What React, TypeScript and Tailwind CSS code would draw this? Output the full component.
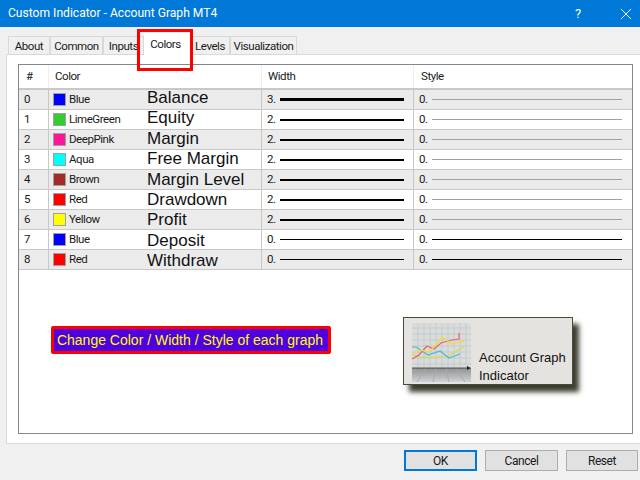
import React from 'react';

const TABS = [
  { label: 'About', cls: 'w-[42px]' },
  { label: 'Common', cls: 'w-[53px]' },
  { label: 'Inputs', cls: 'w-[41px]' },
  { label: 'Colors', cls: 'w-[46px] pr-[3px]', active: true },
  { label: 'Levels', cls: 'w-[40px]' },
  { label: 'Visualization', cls: 'w-[67px]' },
];

const ROWS = [
  { name: 'Blue', swatch: 'bg-[#0000ff]', label: 'Balance', width: '3.', line: 'h-[3px]', style: 'bg-[#a0a0a0]', lift: '-translate-y-[2px]' },
  { name: 'LimeGreen', swatch: 'bg-[#32cd32]', label: 'Equity', width: '2.', line: 'h-[2px]', style: 'bg-[#a0a0a0]', lift: '-translate-y-[2px]' },
  { name: 'DeepPink', swatch: 'bg-[#ff1493]', label: 'Margin', width: '2.', line: 'h-[2px]', style: 'bg-[#a0a0a0]', lift: '-translate-y-[1px]' },
  { name: 'Aqua', swatch: 'bg-[#00ffff]', label: 'Free Margin', width: '2.', line: 'h-[2px]', style: 'bg-[#a0a0a0]', lift: '-translate-y-[1px]' },
  { name: 'Brown', swatch: 'bg-[#a52a2a]', label: 'Margin Level', width: '2.', line: 'h-[2px]', style: 'bg-[#a0a0a0]', lift: 'translate-y-0' },
  { name: 'Red', swatch: 'bg-[#ff0000]', label: 'Drawdown', width: '2.', line: 'h-[2px]', style: 'bg-[#a0a0a0]', lift: 'translate-y-0' },
  { name: 'Yellow', swatch: 'bg-[#ffff00]', label: 'Profit', width: '2.', line: 'h-[2px]', style: 'bg-[#a0a0a0]', lift: 'translate-y-0' },
  { name: 'Blue', swatch: 'bg-[#0000ff]', label: 'Deposit', width: '0.', line: 'h-px', style: 'bg-black', lift: 'translate-y-[1px]' },
  { name: 'Red', swatch: 'bg-[#ff0000]', label: 'Withdraw', width: '0.', line: 'h-px', style: 'bg-black', lift: 'translate-y-[1px]' },
];

const ChartLogo = () => (
  <svg width="59" height="59" viewBox="0 0 59 59" className="shrink-0">
    <defs>
      <linearGradient id="floor" x1="0" y1="0" x2="0" y2="1">
        <stop offset="0" stopColor="#8e9292" />
        <stop offset="1" stopColor="#d0d3d3" />
      </linearGradient>
    </defs>
    <rect width="59" height="59" fill="#dadcdc" />
    {[6, 12, 18, 24, 30, 36, 42, 48, 54].map((x) => (
      <path key={x} d={`M${x} 0V44`} stroke="#c6caca" strokeWidth="1" />
    ))}
    {[5, 11, 17, 23, 29, 35, 41].map((y) => (
      <path key={y} d={`M0 ${y}H59`} stroke="#c6caca" strokeWidth="1" />
    ))}
    <rect y="45" width="59" height="14" fill="url(#floor)" />
    {[4, 14, 24, 34, 44, 54].map((x) => (
      <path key={x} d={`M${x} 45L${(x - 29) * 1.6 + 29} 59`} stroke="#a6aaaa" strokeWidth="1" />
    ))}
    <path d="M0 45H57" stroke="#333" strokeWidth="0.8" />
    <path d="M59 45l-4-2v4z" fill="#222" />
    <path d="M0 31L8 34L22 34L36 33L50 25L52 22" fill="none" stroke="#cfdc50" strokeWidth="1.2" />
    <path d="M0 36L7 32L15 23L22 26L29 20L40 17L47 16L47 10" fill="none" stroke="#f06060" strokeWidth="1.2" />
    <path d="M0 24L4 24L16 32L28 28L37 35L48 31" fill="none" stroke="#45bcd8" strokeWidth="1.2" />
    <path d="M1 30L8 27L18 29L30 14L40 21L52 18" fill="none" stroke="#f5d93a" strokeWidth="1.2" />
  </svg>
);

export default function App() {
  return (
    <div className="relative w-[640px] h-[480px] overflow-hidden flex flex-col bg-[#f0f0f0] text-[#1a1a1a] text-[11.5px] tracking-[-0.45px] font-['Roboto',sans-serif]">
      <div className="h-[27px] shrink-0 bg-[#0078d7] flex items-center pl-2 text-white text-[12.1px] tracking-normal">
        <span className="flex-1">Custom Indicator - Account Graph MT4</span>
        <span className="w-[46px] text-[13px]">?</span>
        <svg className="w-[10px] h-[10px] mr-[9px]" viewBox="0 0 10 10" stroke="white" strokeWidth="1" fill="none">
          <path d="M0 0L10 10M10 0L0 10" />
        </svg>
      </div>

      <div className="h-[27px] shrink-0 flex items-end pl-2">
        {TABS.map((t) =>
          t.active ? (
            <div key={t.label} className={`${t.cls} h-[22px] -mb-px z-10 bg-white pt-[3px] text-center`}>
              {t.label}
            </div>
          ) : (
            <div key={t.label} className={`${t.cls} h-[18px] bg-[#f0f0f0] border border-b-0 border-[#d9d9d9] text-center leading-[18px]`}>
              {t.label}
            </div>
          ),
        )}
      </div>

      <div className="ml-[6px] h-[390px] shrink-0 bg-white border-t border-l border-b border-[#d9d9d9] pt-[9px] pl-[11px] pr-[7px] pb-[9px]">
        <div className="h-full border border-[#828790] flex flex-col">
          <div className="h-[25px] shrink-0 flex items-center border-b-2 border-[#c8c8c8]">
            <div className="w-[30px] pl-[7px] self-stretch flex items-center border-r border-[#eeeeee]">#</div>
            <div className="w-[213px] pl-[6px] self-stretch flex items-center border-r border-[#eeeeee]">Color</div>
            <div className="w-[152px] pl-[6px] self-stretch flex items-center border-r border-[#eeeeee]">Width</div>
            <div className="flex-1 pl-[7px]">Style</div>
          </div>
          {ROWS.map((r, i) => (
            <div key={i} className={`h-[20px] shrink-0 flex items-center border-b border-[#c8c8c8] ${i % 2 === 0 ? 'bg-[#ebebeb]' : 'bg-white'}`}>
              <div className="w-[30px] pl-[5px] self-stretch flex items-center border-r border-[#c8c8c8]">{i}</div>
              <div className="w-[213px] pl-[4px] self-stretch flex items-center border-r border-[#c8c8c8]">
                <span className={`w-[13px] h-[13px] border border-[#a0a0a0] shrink-0 ${r.swatch}`} />
                <span className="w-[81px] pl-[3px] shrink-0">{r.name}</span>
                <span className={`font-['Liberation_Sans',sans-serif] text-[17px] tracking-normal whitespace-nowrap text-[#111111] ${r.lift}`}>{r.label}</span>
              </div>
              <div className="w-[152px] pl-[5px] pr-[9px] self-stretch flex items-center gap-[4px] border-r border-[#c8c8c8]">
                <span>{r.width}</span>
                <span className={`flex-1 bg-black ${r.line}`} />
              </div>
              <div className="flex-1 pl-[5px] pr-[10px] flex items-center gap-[4px]">
                <span>0.</span>
                <span className={`flex-1 h-px ${r.style}`} />
              </div>
            </div>
          ))}

          <div className="flex-1 flex items-start pl-[32px] pr-[59px] pt-[47px] justify-between">
            <div className="mt-[9px] w-[280px] h-[28px] pr-[2px] rounded-[2px] border-[3px] border-[#ff0000] bg-[#5000e0] flex items-center justify-center font-['Liberation_Sans',sans-serif] text-[14px] tracking-normal text-[#ffff00] whitespace-nowrap">
              Change Color / Width / Style of each graph
            </div>
            <div className="w-[170px] h-[68px] border border-[#4a4a38] bg-[#e4e3df] shadow-[6px_7px_5px_#3c3c30] flex pl-2 pt-[5px] gap-[8px] font-['Liberation_Sans',sans-serif] text-[13px] tracking-normal text-[#111111]">
              <ChartLogo />
              <div className="pt-[26px] leading-[18px]">
                Account Graph
                <br />
                Indicator
              </div>
            </div>
          </div>
        </div>
      </div>

      <div className="flex-1 flex items-start justify-end gap-[8px] pt-[6px] pr-[2px]">
        <div className="w-[73px] h-[21px] border-2 border-[#0078d7] bg-[#e1e1e1] flex items-center justify-center text-[12px]">OK</div>
        <div className="w-[73px] h-[21px] border border-[#adadad] bg-[#e1e1e1] flex items-center justify-center text-[12px]">Cancel</div>
        <div className="w-[72px] h-[21px] border border-[#adadad] bg-[#e1e1e1] flex items-center justify-center text-[12px]">Reset</div>
      </div>

      {/* red annotation box around the Colors tab */}
      <div className="absolute left-[137px] top-[29px] w-[56px] h-[42px] border-[3px] border-[#ff0000] z-20" />
    </div>
  );
}
